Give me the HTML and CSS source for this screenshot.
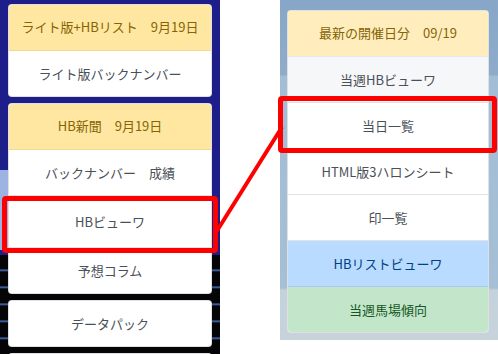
FILE: index.html
```html
<!DOCTYPE html>
<html lang="ja">
<head>
  <meta charset="UTF-8">
  <meta name="viewport" content="width=device-width, initial-scale=1.0">
  <title>HBメニュー</title>
  <link rel="stylesheet" href="styles.css">
</head>
<body>
  <div class="shot">
    <!-- 左：スマホ版メニュー -->
    <div class="left">
      <div class="card">
        <div class="head">ライト版+HBリスト　9月19日</div>
        <div class="item">ライト版バックナンバー</div>
      </div>
      <div class="card">
        <div class="head">HB新聞　9月19日</div>
        <div class="item">バックナンバー　成績</div>
        <div class="item tall">HBビューワ</div>
        <div class="item">予想コラム</div>
      </div>
      <div class="card">
        <div class="item">データパック</div>
      </div>
      <div class="card">
        <div class="item">&nbsp;</div>
      </div>
    </div>

    <!-- 右：PC版メニュー -->
    <div class="right">
      <div class="card">
        <div class="head pale">最新の開催日分　09/19</div>
        <div class="item light">当週HBビューワ</div>
        <div class="item">当日一覧</div>
        <div class="item">HTML版3ハロンシート</div>
        <div class="item">印一覧</div>
        <div class="item blue">HBリストビューワ</div>
        <div class="item green">当週馬場傾向</div>
      </div>
    </div>

    <!-- 注釈 -->
    <div class="mark mark-left"></div>
    <div class="mark mark-right"></div>
    <svg class="link" width="498" height="354" viewBox="0 0 498 354">
      <line x1="215" y1="234" x2="282" y2="127" stroke="#ff0000" stroke-width="4"></line>
    </svg>
  </div>
</body>
</html>
```

FILE: styles.css
```css
body {
  margin: 0;
  background: #fff;
  font-family: "Noto Sans CJK JP", "Noto Sans", sans-serif;
  font-size: 13px;
}
.shot {
  position: relative;
  width: 498px;
  height: 354px;
  display: flex;
  gap: 60px;
  overflow: hidden;
}
.left {
  width: 220px;
  height: 354px;
  box-sizing: border-box;
  padding: 4px 8px 0;
  overflow: hidden;
  background:
    linear-gradient(to right, rgba(170, 195, 235, 0.9) 0, rgba(170, 195, 235, 0.9) 8px, transparent 8px) 0 170px / 220px 80px no-repeat,
    repeating-linear-gradient(to bottom, #050508 0, #050508 14px, #4a78c8 15px, #050508 17px) 0 255px / 220px 100px no-repeat,
    #1e1e8a;
}
.right {
  width: 218px;
  height: 340px;
  box-sizing: border-box;
  padding: 10px 9px 0 7px;
  background: linear-gradient(to bottom, #88a7c8 0, #8eabca 75px, #a2bdd6 76px, #a5bfd6 288px, #c4d2db 290px, #c6d3db 100%);
}
.card {
  background: #fff;
  border: 1px solid rgba(0, 0, 0, 0.12);
  border-radius: 4px;
  overflow: hidden;
  margin-bottom: 6px;
}
.head {
  background: #ffe7a1;
  color: #856404;
  text-align: center;
  line-height: 20px;
  padding: 12px 0 13px;
  border-bottom: 1px solid #f1d98e;
}
.head.pale {
  background: #ffedbd;
  border-bottom-color: #e6e9ee;
}
.item {
  color: #495057;
  text-align: center;
  line-height: 20px;
  padding: 13px 0 12px;
  border-bottom: 1px solid #dfe2e6;
}
.item:last-child {
  border-bottom: none;
}
.item.tall {
  padding: 16px 0 15px;
}
.item.light {
  background: #f6f7f9;
}
.item.blue {
  background: #b9dbff;
  color: #004085;
  border-bottom-color: #a9c9ec;
}
.item.green {
  background: #c3e6cb;
  color: #155724;
}
.mark {
  position: absolute;
  box-sizing: border-box;
  border: 5px solid #ff0000;
  border-radius: 4px;
}
.mark-left {
  left: 2px;
  top: 196px;
  width: 216px;
  height: 57px;
}
.mark-right {
  left: 278px;
  top: 96px;
  width: 219px;
  height: 57px;
}
.link {
  position: absolute;
  left: 0;
  top: 0;
}
```
